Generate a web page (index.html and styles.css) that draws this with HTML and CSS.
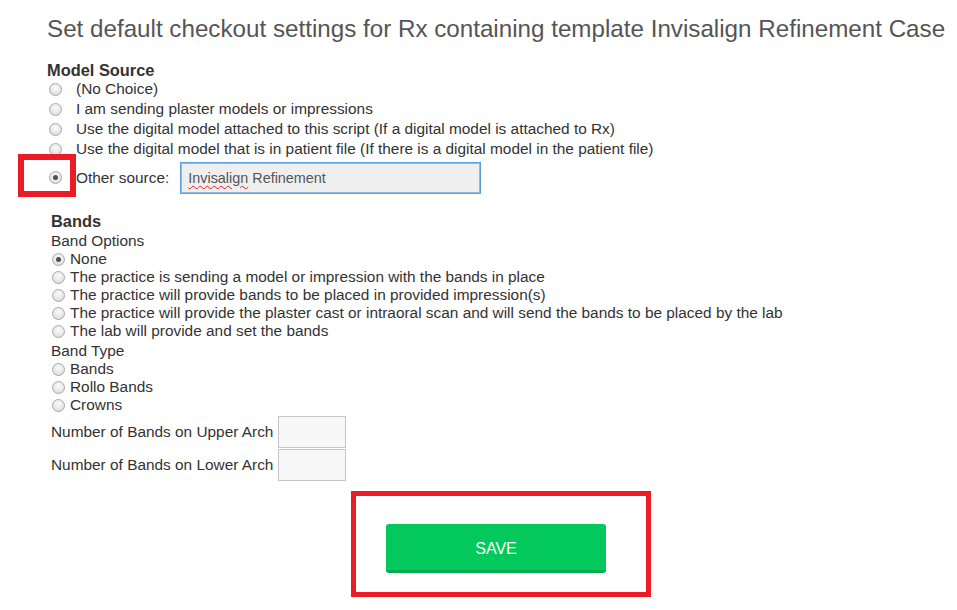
FILE: index.html
```html
<!DOCTYPE html>
<html>
<head>
<meta charset="utf-8">
<link rel="stylesheet" href="styles.css">
</head>
<body>
<div class="page">
  <h1 class="title">Set default checkout settings for Rx containing template Invisalign Refinement Case</h1>

  <section class="model-source">
    <div class="section-head">Model Source</div>
    <div class="ms-row"><span class="radio"></span><span class="ms-label">(No Choice)</span></div>
    <div class="ms-row"><span class="radio"></span><span class="ms-label">I am sending plaster models or impressions</span></div>
    <div class="ms-row"><span class="radio"></span><span class="ms-label">Use the digital model attached to this script (If a digital model is attached to Rx)</span></div>
    <div class="ms-row"><span class="radio"></span><span class="ms-label">Use the digital model that is in patient file (If there is a digital model in the patient file)</span></div>
    <div class="ms-row other-row">
      <span class="radio checked"></span><span class="ms-label">Other source:</span>
      <div class="text-input"><span class="misspelled">Invisalign</span> Refinement</div>
      <div class="annot annot-radio"></div>
    </div>
  </section>

  <section class="bands">
    <div class="section-head">Bands</div>
    <div class="sub-head">Band Options</div>
    <div class="b-row"><span class="radio checked"></span><span>None</span></div>
    <div class="b-row"><span class="radio"></span><span>The practice is sending a model or impression with the bands in place</span></div>
    <div class="b-row"><span class="radio"></span><span>The practice will provide bands to be placed in provided impression(s)</span></div>
    <div class="b-row"><span class="radio"></span><span>The practice will provide the plaster cast or intraoral scan and will send the bands to be placed by the lab</span></div>
    <div class="b-row"><span class="radio"></span><span>The lab will provide and set the bands</span></div>
    <div class="sub-head type-head">Band Type</div>
    <div class="b-row"><span class="radio"></span><span>Bands</span></div>
    <div class="b-row"><span class="radio"></span><span>Rollo Bands</span></div>
    <div class="b-row"><span class="radio"></span><span>Crowns</span></div>
    <div class="num-rows">
      <div class="num-row"><span>Number of Bands on Upper Arch</span><span class="num-input"></span></div>
      <div class="num-row"><span>Number of Bands on Lower Arch</span><span class="num-input"></span></div>
    </div>
  </section>

  <div class="actions">
    <div class="save-wrap">
      <button class="save">SAVE</button>
      <div class="annot annot-save"></div>
    </div>
  </div>
</div>
</body>
</html>
```

FILE: styles.css
```css
* { box-sizing: border-box; }
html, body { margin: 0; padding: 0; background: #fff; }
body {
  font-family: Arial, "Liberation Sans", sans-serif;
  color: #333;
  font-size: 15.4px;
}
.page {
  width: 957px;
  min-height: 610px;
  padding: 15px 12px 0 47px;
}
.title {
  margin: 0;
  font-size: 24.2px;
  font-weight: normal;
  line-height: 28px;
  color: #555;
  white-space: nowrap;
}
.section-head {
  font-weight: bold;
  font-size: 16.4px;
  line-height: 20px;
  color: #333;
}
.model-source { margin-top: 17px; }
.model-source .section-head { line-height: 20px; margin-bottom: -1px; }
.ms-row {
  display: flex;
  align-items: center;
  height: 20px;
}
.ms-row .radio { margin-left: 2px; margin-right: 14px; }
.other-row {
  position: relative;
  height: 36px;
  padding-top: 1px;
}
.other-row .ms-label { margin-right: 11px; }
.text-input {
  width: 301px;
  height: 32px;
  border: 1px solid #5d9fdc;
  box-shadow: 0 0 0 1px #8fbbe6 inset;
  background: #efefef;
  color: #555;
  font-size: 14.4px;
  line-height: 30px;
  padding-left: 7px;
}
.misspelled {
  text-decoration: underline wavy #e02020;
  text-decoration-thickness: 1px;
  text-underline-offset: 2px;
}
.radio {
  display: inline-block;
  width: 13px;
  height: 13px;
  border-radius: 50%;
  border: 1px solid #a9a9a9;
  background: radial-gradient(circle at 50% 35%, #fafafa 0%, #e8e8e8 55%, #d2d2d2 100%);
  flex: none;
  position: relative;
}
.radio.checked::after {
  content: "";
  position: absolute;
  left: 3px;
  top: 3px;
  width: 5px;
  height: 5px;
  border-radius: 50%;
  background: #505050;
}
.bands {
  margin-top: 16px;
  margin-left: 4px;
}
.bands .section-head { margin-top: 0; }
.sub-head {
  line-height: 18px;
  margin-top: 1px;
}
.type-head { margin-top: 2px; }
.b-row {
  display: flex;
  align-items: center;
  height: 18px;
}
.b-row .radio { margin-left: 1px; margin-right: 5px; }
.num-rows {
  margin-top: 2px;
  display: flex;
  flex-direction: column;
  gap: 1px;
}
.num-row {
  display: flex;
  align-items: center;
  height: 32px;
}
.num-row span:first-child { margin-right: 5px; }
.num-input {
  display: inline-block;
  width: 68px;
  height: 32px;
  border: 1px solid #c6c6c6;
  background: #f7f7f7;
}
.actions {
  display: flex;
  justify-content: center;
  margin-top: 43px;
}
.save-wrap { position: relative; }
.save {
  width: 220px;
  height: 49px;
  border: none;
  border-bottom: 3px solid #05ab4f;
  border-radius: 3px;
  background: #03c95d;
  color: #fff;
  font-family: Arial, "Liberation Sans", sans-serif;
  font-size: 16px;
  padding: 3px 0 0 0;
  display: block;
}
.annot {
  position: absolute;
  border: 6px solid #ec1c24;
}
.annot-radio {
  left: -29px;
  top: -5px;
  width: 58px;
  height: 43px;
}
.annot-save {
  left: -35px;
  top: -33px;
  width: 300px;
  height: 106px;
  border-width: 5px;
}
```
